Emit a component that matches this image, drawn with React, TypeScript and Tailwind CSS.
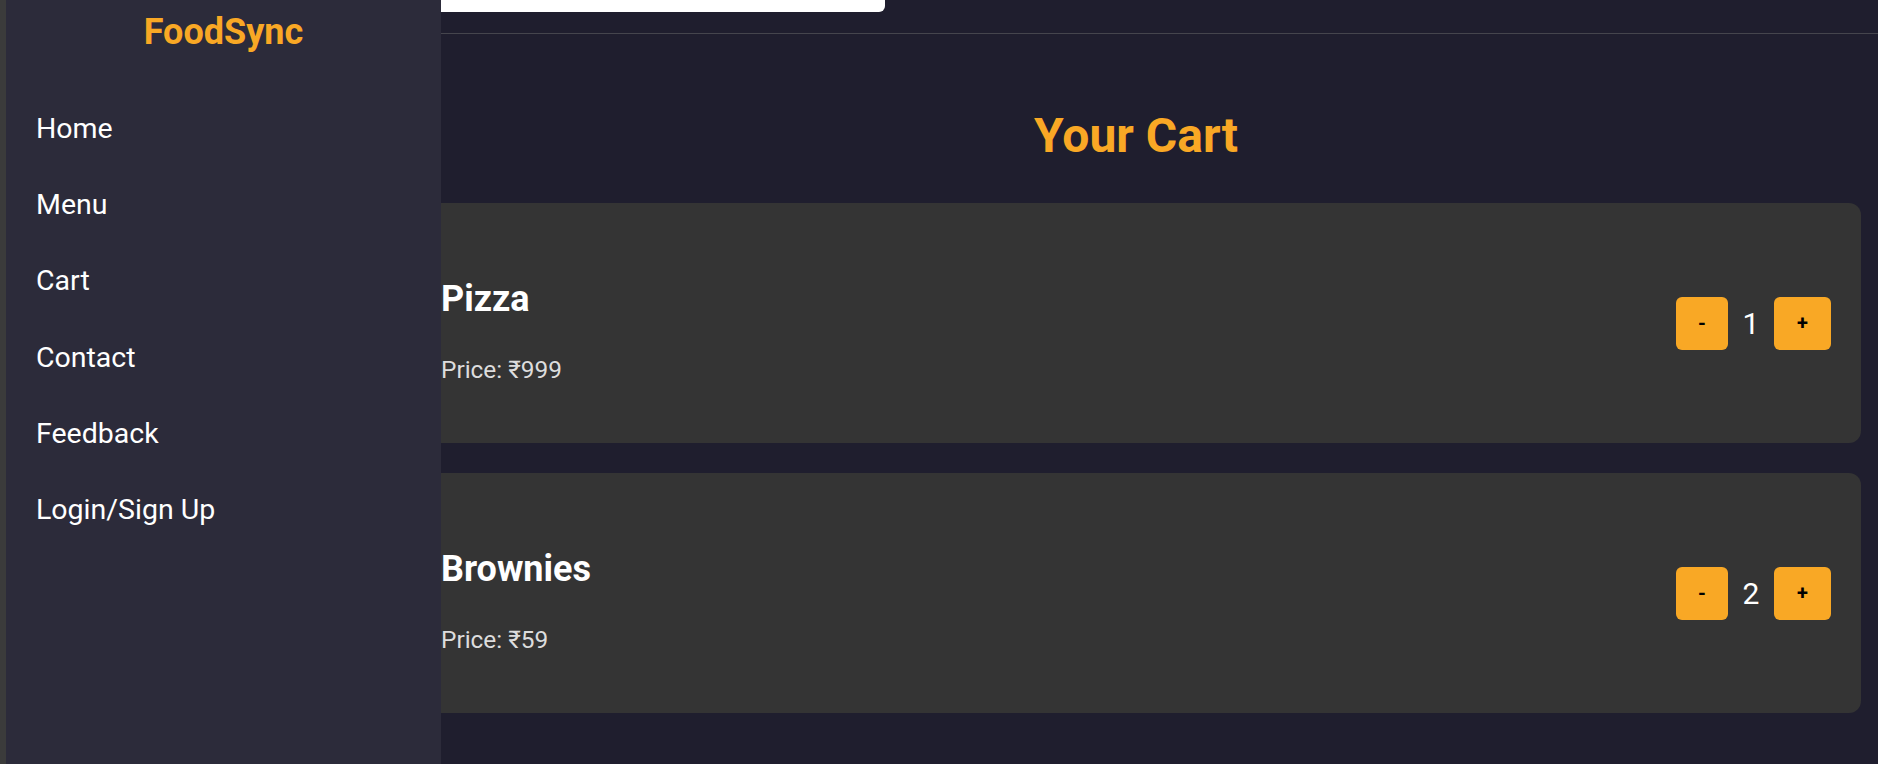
import React from "react";

const navLinks = ["Home", "Menu", "Cart", "Contact", "Feedback", "Login/Sign Up"];

const cartItems = [
  { name: "Pizza", price: 999, qty: 1 },
  { name: "Brownies", price: 59, qty: 2 },
];

function CartItem({ name, price, qty }: { name: string; price: number; qty: number }) {
  return (
    <div className="h-[240px] rounded-[12px] bg-[#343434] pl-[30px] pr-[30px] flex items-center justify-between">
      <div className="flex flex-col pt-[14px]">
        <h2 className="text-[36px] font-bold leading-normal text-white">{name}</h2>
        <p className="mt-[26px] text-[24.4px] leading-normal text-[#dddddd]">Price: ₹{price}</p>
      </div>
      <div className="flex items-center">
        <button className="h-[53px] w-[52px] rounded-[6px] bg-[#f9a825] text-[20px] font-bold leading-normal text-black">
          -
        </button>
        <span className="w-[46px] text-center text-[30px] leading-normal text-white">{qty}</span>
        <button className="h-[53px] w-[57px] rounded-[6px] bg-[#f9a825] text-[20px] font-bold leading-normal text-black">
          +
        </button>
      </div>
    </div>
  );
}

export default function App() {
  return (
    <div className="relative min-h-screen bg-[#1f1e2e] font-['Roboto',sans-serif]">
      {/* Top bar (scrolled, search input partly visible) */}
      <header className="h-[34px] border-b border-[#45454d] pl-[411px]">
        <div className="h-[12px] w-[474px] rounded-b-[6px] bg-white" />
      </header>

      <main className="ml-[411px] mr-[17px] pb-[51px]">
        <h1 className="mt-[66px] text-center text-[48px] font-bold leading-normal text-[#f9a825]">
          Your Cart
        </h1>
        <div className="mt-[31px] flex flex-col gap-[30px]">
          {cartItems.map((item) => (
            <CartItem key={item.name} {...item} />
          ))}
        </div>
      </main>

      {/* Slide-out drawer */}
      <aside className="fixed left-0 top-0 flex h-screen">
        <div className="w-[6px] bg-[#3b3b3b]" />
        <div className="w-[435px] bg-[#2c2b3a] pt-[5px]">
          <div className="text-center text-[36px] font-bold leading-normal text-[#f9a825]">FoodSync</div>
          <nav className="mt-[53px] flex flex-col gap-[43.2px] pl-[30px]">
            {navLinks.map((link) => (
              <a key={link} href="#" className="text-[28.5px] leading-[33px] text-white">
                {link}
              </a>
            ))}
          </nav>
        </div>
      </aside>
    </div>
  );
}
